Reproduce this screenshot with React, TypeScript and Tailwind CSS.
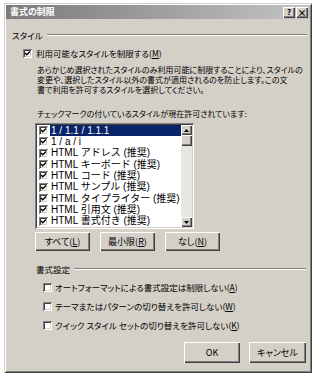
import React from 'react';

const jp = "font-['Noto_Sans_CJK_JP','Noto_Sans',sans-serif] [font-feature-settings:'palt']";

function Check({ checked }: { checked: boolean }) {
    return (
        <span className="inline-block w-[9px] h-[9px] bg-white shrink-0 shadow-[inset_1px_1px_0_#808080,inset_-1px_-1px_0_#ffffff,inset_2px_2px_0_#404040,inset_-2px_-2px_0_#d4d0c8] relative">
            {checked && (
                <svg viewBox="0 0 9 9" className="absolute inset-0 w-[9px] h-[9px]">
                    <path d="M2 4 L3.8 5.8 L7 2.6" stroke="#000" strokeWidth="1.4" fill="none" />
                </svg>
            )}
        </span>
    );
}

function Btn({ children, className = '' }: { children: React.ReactNode; className?: string }) {
    return (
        <div className={`flex items-center justify-center bg-[#d4d0c8] text-[9px] text-black shadow-[inset_1px_1px_0_#ffffff,inset_-1px_-1px_0_#404040,inset_-2px_-2px_0_#808080] ${className}`}>
            {children}
        </div>
    );
}

function Group({ label, className = '' }: { label: string; className?: string }) {
    return (
        <div className={`flex items-center gap-[4px] h-[12px] ${className}`}>
            <span className="text-[8.5px] leading-[12px] whitespace-nowrap">{label}</span>
            <div className="flex-1 h-[2px] border-t border-[#808080] border-b border-b-white" />
        </div>
    );
}

const items = [
    '1 / 1.1 / 1.1.1',
    '1 / a / i',
    'HTML アドレス (推奨)',
    'HTML キーボード (推奨)',
    'HTML コード (推奨)',
    'HTML サンプル (推奨)',
    'HTML タイプライター (推奨)',
    'HTML 引用文 (推奨)',
    'HTML 書式付き (推奨)',
];

export default function App() {
    return (
        <div className={`w-[320px] h-[379px] bg-white pt-[3px] pl-[4px] ${jp}`}>
            <div className="w-[308px] h-[370px] bg-[#d4d0c8] p-[2px] flex flex-col shadow-[inset_1px_1px_0_#d4d0c8,inset_-1px_-1px_0_#404040,inset_2px_2px_0_#ffffff,inset_-2px_-2px_0_#808080]">
                {/* Title bar */}
                <div className="h-[14px] bg-linear-to-r from-[#7a7a7a] to-[#c4c4c4] flex items-center pl-[4px] pr-[2px]">
                    <span className="text-white font-bold text-[9px] leading-[14px]">書式の制限</span>
                    <div className="ml-auto flex gap-[1px]">
                        <Btn className="w-[12px] h-[11px] !text-[8px] font-bold leading-none">?</Btn>
                        <Btn className="w-[12px] h-[11px] !text-[9px] font-bold leading-none">×</Btn>
                    </div>
                </div>

                <div className="flex flex-col pl-[6px] pr-[3px] text-black">
                    <Group label="スタイル" className="mt-[10px]" />

                    <div className="flex items-center gap-[4px] h-[12px] mt-[6px] pl-[11px]">
                        <Check checked />
                        <span className="text-[8.5px] leading-[12px] whitespace-nowrap">
                            利用可能なスタイルを制限する(<u>M</u>)
                        </span>
                    </div>

                    <div className="mt-[6px] pl-[25px] text-[8px] leading-[10px] whitespace-nowrap">
                        <div>あらかじめ選択されたスタイルのみ利用可能に制限することにより、スタイルの</div>
                        <div>変更や、選択したスタイル以外の書式が適用されるのを防止します。この文</div>
                        <div>書で利用を許可するスタイルを選択してください。</div>
                    </div>

                    <div className="mt-[14px] pl-[25px] text-[8px] leading-[10px] whitespace-nowrap">
                        チェックマークの付いているスタイルが現在許可されています:
                    </div>

                    {/* List box */}
                    <div className="mt-[4px] ml-[23px] w-[159px] h-[106px] bg-white p-[2px] flex shadow-[inset_1px_1px_0_#808080,inset_-1px_-1px_0_#ffffff,inset_2px_2px_0_#404040,inset_-2px_-2px_0_#d4d0c8]">
                        <div className="flex-1 flex flex-col font-['Liberation_Sans','Noto_Sans_CJK_JP',sans-serif] text-[10px] [font-feature-settings:normal]">
                            {items.map((it, i) => (
                                <div key={it} className="h-[11.4px] flex items-center pl-[2px]">
                                    <Check checked />
                                    <span
                                        className={`ml-[2px] flex-1 h-full flex items-center pl-[1px] leading-none whitespace-nowrap ${
                                            i === 0 ? 'bg-[#0a246a] text-white' : 'text-black'
                                        }`}
                                    >
                                        {it}
                                    </span>
                                </div>
                            ))}
                        </div>
                        {/* Scrollbar */}
                        <div className="w-[11px] flex flex-col bg-[#e8e6e0]">
                            <Btn className="h-[10px] w-[11px]">
                                <svg viewBox="0 0 7 4" className="w-[5px] h-[3px]"><path d="M0 4 L3.5 0 L7 4Z" fill="#000" /></svg>
                            </Btn>
                            <Btn className="h-[11px] w-[11px]">{''}</Btn>
                            <div className="flex-1" />
                            <Btn className="h-[10px] w-[11px]">
                                <svg viewBox="0 0 7 4" className="w-[5px] h-[3px]"><path d="M0 0 L3.5 4 L7 0Z" fill="#000" /></svg>
                            </Btn>
                        </div>
                    </div>

                    <div className="mt-[3px] ml-[23px] flex gap-[10px]">
                        <Btn className="w-[55px] h-[19px]">すべて(<u>L</u>)</Btn>
                        <Btn className="w-[55px] h-[19px]">最小限(<u>R</u>)</Btn>
                        <Btn className="w-[55px] h-[19px]">なし(<u>N</u>)</Btn>
                    </div>

                    <Group label="書式設定" className="mt-[12px] ml-[24px] mr-[1px]" />

                    <div className="flex flex-col gap-[7px] mt-[6px] pl-[31px]">
                        <div className="flex items-center gap-[3px] h-[12px]">
                            <Check checked={false} />
                            <span className="text-[8.5px] leading-[12px] whitespace-nowrap">オートフォーマットによる書式設定は制限しない(<u>A</u>)</span>
                        </div>
                        <div className="flex items-center gap-[3px] h-[12px]">
                            <Check checked={false} />
                            <span className="text-[8.5px] leading-[12px] whitespace-nowrap">テーマまたはパターンの切り替えを許可しない(<u>W</u>)</span>
                        </div>
                        <div className="flex items-center gap-[3px] h-[12px]">
                            <Check checked={false} />
                            <span className="text-[8.5px] leading-[12px] whitespace-nowrap">クイック スタイル セットの切り替えを許可しない(<u>K</u>)</span>
                        </div>
                    </div>

                    <div className="mt-[11px] flex justify-end gap-[9px] pr-[1px]">
                        <Btn className="w-[56px] h-[21px]">OK</Btn>
                        <Btn className="w-[57px] h-[21px]">キャンセル</Btn>
                    </div>
                </div>
            </div>
        </div>
    );
}
